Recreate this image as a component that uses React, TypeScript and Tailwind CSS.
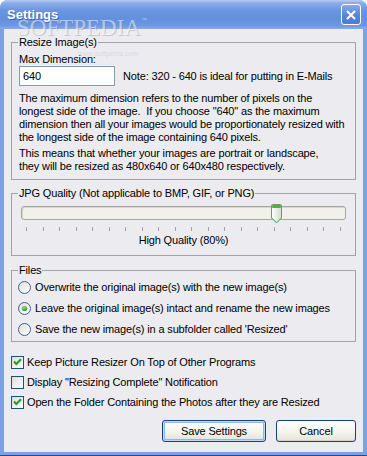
import React from "react";

const Checkbox = ({ checked }: { checked: boolean }) => (
  <svg width="13" height="13" viewBox="0 0 13 13" className="shrink-0">
    <defs>
      <linearGradient id="cbg" x1="0" y1="0" x2="1" y2="1">
        <stop offset="0" stopColor="#dcdcd6" />
        <stop offset="1" stopColor="#ffffff" />
      </linearGradient>
    </defs>
    <rect x="0.5" y="0.5" width="12" height="12" fill="url(#cbg)" stroke="#1c5180" />
    {checked && (
      <path d="M3 5.6 L5.3 8 L10 3.3" fill="none" stroke="#21a121" strokeWidth="2.2" />
    )}
  </svg>
);

const Radio = ({ checked }: { checked: boolean }) => (
  <svg width="13" height="13" viewBox="0 0 13 13" className="shrink-0">
    <defs>
      <linearGradient id="rbg" x1="0" y1="0" x2="1" y2="1">
        <stop offset="0" stopColor="#dcdcd6" />
        <stop offset="1" stopColor="#ffffff" />
      </linearGradient>
      <radialGradient id="rdot" cx="0.4" cy="0.35" r="0.7">
        <stop offset="0" stopColor="#8be08b" />
        <stop offset="1" stopColor="#1f9a1f" />
      </radialGradient>
    </defs>
    <circle cx="6.5" cy="6.5" r="6" fill="url(#rbg)" stroke="#3f5f95" />
    {checked && <circle cx="6.5" cy="6.5" r="2.6" fill="url(#rdot)" />}
  </svg>
);

const Thumb = () => (
  <svg width="11" height="20" viewBox="0 0 11 20">
    <defs>
      <linearGradient id="tbg" x1="0" y1="0" x2="1" y2="0">
        <stop offset="0" stopColor="#ffffff" />
        <stop offset="1" stopColor="#d9d9d2" />
      </linearGradient>
    </defs>
    <path
      d="M1.5 0.5 H9.5 Q10.5 0.5 10.5 1.5 V14 L5.5 19 L0.5 14 V1.5 Q0.5 0.5 1.5 0.5 Z"
      fill="url(#tbg)"
      stroke="#7f8f7c"
    />
    <rect x="1" y="1" width="9" height="3" rx="1" fill="#3cbb3c" />
    <path d="M1 14 L5.5 18.3 L10 14" fill="none" stroke="#5fc05f" strokeWidth="0.8" />
  </svg>
);

export default function App() {
  const ticks = Array.from({ length: 20 });
  return (
    <div className="relative w-[367px] h-[456px] overflow-hidden font-['Tahoma','Liberation_Sans',Arial,sans-serif] text-[11px] leading-[13px] tracking-[-0.15px] text-black">
      <div className="flex h-full flex-col rounded-t-[8px] border-b border-[#27488f] bg-[#7ba2e7]">
        <div className="flex h-[29px] shrink-0 items-center justify-between rounded-t-[8px] bg-[linear-gradient(to_bottom,#b7cdf2_0%,#8cade9_10%,#6c96e1_35%,#6190de_65%,#6d97e2_88%,#8aace9_100%)] pl-[7px] pr-[6px]">
          <span className="text-[13px] font-bold tracking-normal text-white [text-shadow:1px_1px_0_#3e63ad]">
            Settings
          </span>
          <div className="flex h-[21px] w-[20px] items-center justify-center rounded-[3px] border border-white bg-[linear-gradient(to_bottom,#86a9ec,#5282da_60%,#4c7cd6)]">
            <svg width="10" height="10" viewBox="0 0 10 10">
              <path d="M1 1 L9 9 M9 1 L1 9" stroke="white" strokeWidth="2" />
            </svg>
          </div>
        </div>

        <div className="mx-[4px] mb-[3px] flex flex-1 flex-col bg-[#ecebef] px-[7px] pt-[7px]">
          <fieldset className="border border-[#a3a3a6] px-[7px] pt-[4px] pb-[6px]">
            <legend className="-ml-[1px] px-[1px]">Resize Image(s)</legend>
            <div>Max Dimension:</div>
            <div className="flex items-center gap-[8px]">
              <div className="h-[20px] w-[96px] shrink-0 border border-[#7f9db9] bg-white pl-[3px] leading-[18px]">
                640
              </div>
              <span className="whitespace-nowrap">Note: 320 - 640 is ideal for putting in E-Mails</span>
            </div>
            <p className="mt-[6px] whitespace-pre">
              {"The maximum dimension refers to the number of pixels on the\nlongest side of the image.  If you choose \"640\" as the maximum\ndimension then all your images would be proportionately resized with\nthe longest side of the image containing 640 pixels."}
            </p>
            <p className="mt-[3px] whitespace-pre">
              {"This means that whether your images are portrait or landscape,\nthey will be resized as 480x640 or 640x480 respectively."}
            </p>
          </fieldset>

          <fieldset className="mt-[7px] border border-[#a3a3a6] px-[7px] pt-[6px] pb-[8px]">
            <legend className="-ml-[1px] px-[1px]">JPG Quality (Not applicable to BMP, GIF, or PNG)</legend>
            <div className="mx-[2px]">
              <div className="relative h-[14px] rounded-[3px] border border-[#a7a7a2] bg-[#f1f0ea] shadow-[inset_1px_1px_0_#d6d5cf]">
                <div className="absolute left-[249px] top-[-3px]">
                  <Thumb />
                </div>
              </div>
              <div className="mx-[5px] mt-[7px] flex h-[4px] justify-between">
                {ticks.map((_, i) => (
                  <div key={i} className="h-[4px] w-[1px] bg-[#a1a1a1]" />
                ))}
              </div>
              <div className="mt-[3px] text-center">High Quality (80%)</div>
            </div>
          </fieldset>

          <fieldset className="mt-[8px] border border-[#a3a3a6] pl-[6px] pr-[7px] pb-[1px]">
            <legend className="ml-0 px-[1px]">Files</legend>
            <div className="flex h-[21px] items-center gap-[4px]">
              <Radio checked={false} />
              <span>Overwrite the original image(s) with the new image(s)</span>
            </div>
            <div className="flex h-[21px] items-center gap-[4px]">
              <Radio checked={true} />
              <span>Leave the original image(s) intact and rename the new images</span>
            </div>
            <div className="flex h-[21px] items-center gap-[4px]">
              <Radio checked={false} />
              <span>Save the new image(s) in a subfolder called 'Resized'</span>
            </div>
          </fieldset>

          <div className="mt-[10px]">
            <div className="flex h-[20px] items-center gap-[3px]">
              <Checkbox checked={true} />
              <span>Keep Picture Resizer On Top of Other Programs</span>
            </div>
            <div className="flex h-[20px] items-center gap-[3px]">
              <Checkbox checked={false} />
              <span>Display "Resizing Complete" Notification</span>
            </div>
            <div className="flex h-[20px] items-center gap-[3px]">
              <Checkbox checked={true} />
              <span>Open the Folder Containing the Photos after they are Resized</span>
            </div>
          </div>

          <div className="mt-[8px] flex justify-end gap-[10px]">
            <button className="h-[22px] w-[104px] rounded-[3px] border border-[#1d3e7c] bg-[linear-gradient(to_bottom,#ffffff,#f4f4f0_55%,#e3e2da)] text-[11px] shadow-[inset_0_0_0_1px_#c5d8fb,inset_0_0_0_2px_#93b2ef]">
              Save Settings
            </button>
            <button className="h-[22px] w-[80px] rounded-[3px] border border-[#1d3e7c] bg-[linear-gradient(to_bottom,#ffffff,#f4f4f0_55%,#e3e2da)] text-[11px] shadow-[inset_0_-1px_0_#d3d1c7]">
              Cancel
            </button>
          </div>
        </div>
      </div>

      <div className="pointer-events-none absolute left-[17px] top-[16px] font-['Liberation_Serif',serif] text-[23px] leading-[23px] tracking-normal text-white/50 [text-shadow:1px_1px_0_rgba(110,110,120,0.3)]">
        SOFTPEDIA
      </div>
      <div className="pointer-events-none absolute left-[141px] top-[17px] font-['Liberation_Sans',sans-serif] text-[6px] leading-[6px] text-white/50">
        ™
      </div>
      <div className="pointer-events-none absolute left-[78px] top-[50px] font-['Liberation_Sans',sans-serif] text-[7px] leading-[7px] tracking-normal text-[#c8c8d0]/50">
        www.softpedia.com
      </div>
    </div>
  );
}
